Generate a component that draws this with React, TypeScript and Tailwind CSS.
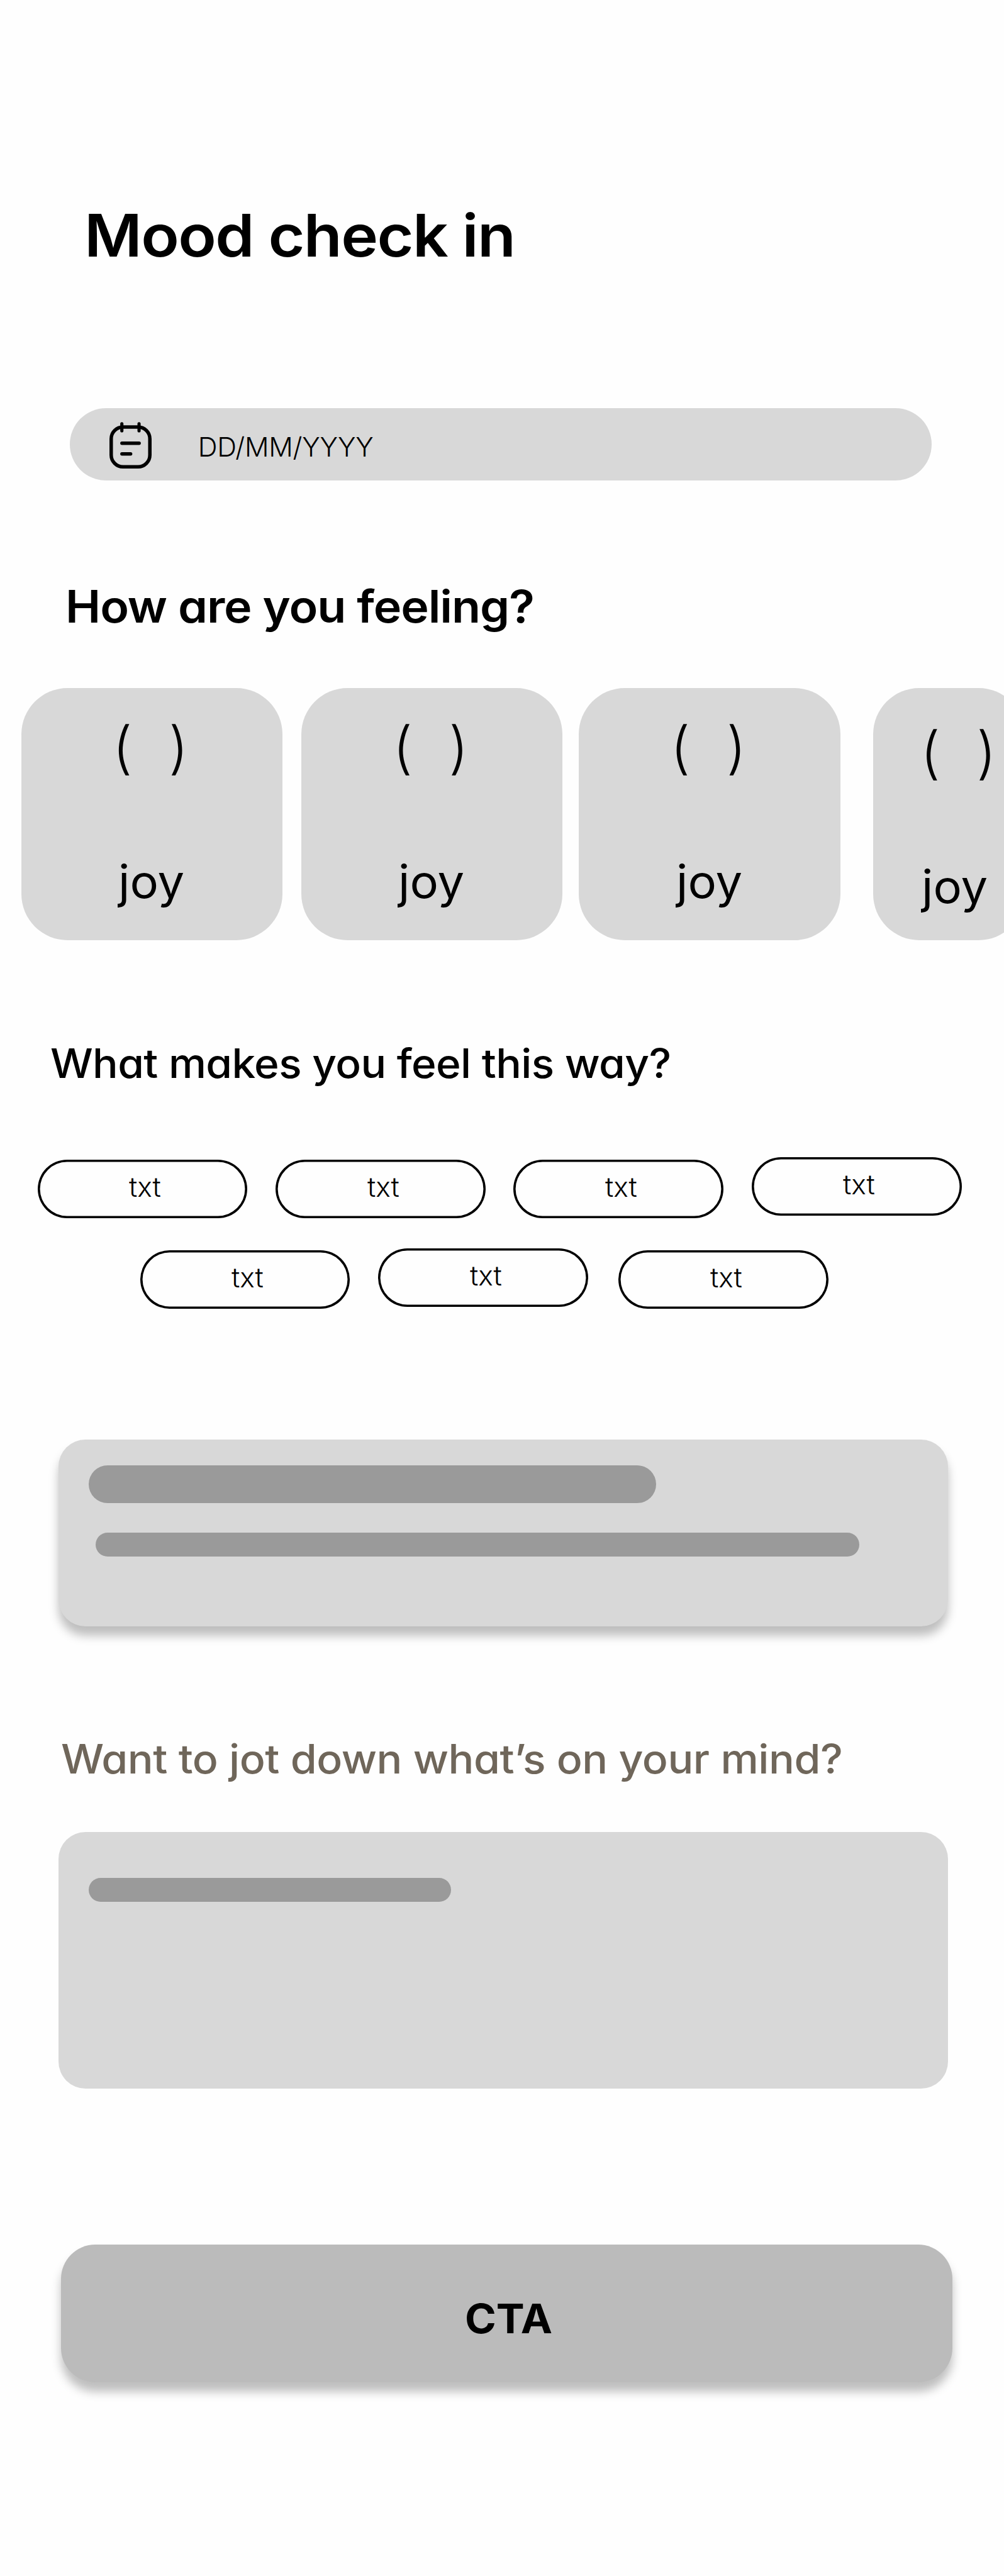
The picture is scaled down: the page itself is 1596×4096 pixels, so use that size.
function CalendarIcon() {
  return (
    <svg className="mt-[21.6px] ml-[63px] h-[75px] w-[67px] shrink-0" viewBox="0 0 75.2 84.2" fill="none" stroke="#000" strokeLinecap="round">
      <rect x="3.1" y="9" width="69" height="71" rx="21" strokeWidth="6.2" />
      <path d="M22.1 3v12.6M52.8 3v12.6" strokeWidth="5.7" />
      <path d="M22.3 37.8h30.6M22.3 57h15.4" strokeWidth="6.2" />
    </svg>
  );
}

function MoodCard({ className }: { className: string }) {
  return (
    <article className={`flex h-[400.8px] shrink-0 flex-col items-start rounded-[73.5px] bg-[#d8d8d8] ${className}`}>
      <div className="flex gap-[57.6px] text-[90px] leading-[90px] font-light">
        <span>(</span>
        <span>)</span>
      </div>
      <p className="mt-[131.2px] ml-[9px] origin-left scale-x-[1.04] text-[73px] leading-[73px]">joy</p>
    </article>
  );
}

function Chip({ className = "" }: { className?: string }) {
  return (
    <button
      className={`flex h-[92.7px] w-[333.7px] shrink-0 items-start rounded-full pt-[21.9px] pl-[145.6px] text-[43px] leading-[43px] font-light shadow-[inset_0_0_0_3.6px_#000] ${className}`}
    >
      <span className="origin-left scale-x-[1.035]">txt</span>
    </button>
  );
}

export default function App() {
  return (
    <main className="flex h-[4096px] w-[1596px] flex-col items-start overflow-hidden bg-[#fefefe] pt-[327.6px] font-['Inter',sans-serif] whitespace-nowrap text-black [font-feature-settings:'cv11']">
      <h1 className="ml-[133.6px] origin-left scale-x-[1.071] text-[93px] leading-[93px] font-semibold tracking-[-1.5px]">Mood check in</h1>

      <div className="mt-[228.6px] ml-[111.2px] flex h-[114.9px] w-[1369.6px] items-start rounded-full bg-[#d8d8d8]">
        <CalendarIcon />
        <span className="mt-[41.2px] ml-[73.6px] text-[42.8px] leading-[42.8px] font-light tracking-[-0.2px]">DD/MM/YYYY</span>
      </div>

      <h2 className="mt-[165.2px] ml-[103.8px] origin-left scale-x-[1.0614] text-[71px] leading-[71px] font-semibold tracking-[-1px]">
        How are you feeling?
      </h2>

      <section className="mt-[94.2px] flex w-full overflow-hidden pl-[33.5px]">
        <MoodCard className="w-[415.5px] pt-[49.8px] pl-[145.6px]" />
        <MoodCard className="ml-[29.8px] w-[415.5px] pt-[49.8px] pl-[145.6px]" />
        <MoodCard className="ml-[25.9px] w-[415.5px] pt-[49.8px] pl-[145.6px]" />
        <article className="ml-[52.1px] flex h-[400.8px] w-[241px] shrink-0 flex-col items-start rounded-[73.5px] bg-[#d8d8d8] pt-[57.2px] pl-[75.5px]">
          <div className="flex gap-[57.6px] text-[90px] leading-[90px] font-light">
            <span>(</span>
            <span>)</span>
          </div>
          <p className="mt-[131.2px] ml-[1.9px] origin-left scale-x-[1.04] text-[73px] leading-[73px]">joy</p>
        </article>
      </section>

      <h2 className="mt-[163.8px] ml-[80px] origin-left scale-x-[1.0556] text-[64px] leading-[64px] font-medium tracking-[-0.6px]">
        What makes you feel this way?
      </h2>

      <section className="mt-[117.1px] ml-[59.7px] flex items-start gap-[44.7px]">
        <Chip className="mt-[3.8px]" />
        <Chip className="mt-[3.8px]" />
        <Chip className="mt-[3.8px]" />
        <Chip />
      </section>
      <section className="mt-[48.3px] ml-[222.7px] flex items-start">
        <Chip className="mt-[3.5px]" />
        <Chip className="ml-[44.6px]" />
        <Chip className="mt-[3.5px] ml-[48.8px]" />
      </section>

      <section className="mt-[208.3px] ml-[92.8px] flex h-[296.4px] w-[1414.1px] flex-col items-start rounded-[43px] bg-[#d8d8d8] pt-[40.4px] shadow-[0_14.8px_14.8px_rgba(0,0,0,0.25)]">
        <div className="ml-[48.1px] h-[60px] w-[902.4px] rounded-full bg-[#9a9a9a]" />
        <div className="mt-[47.5px] ml-[59.3px] h-[37.7px] w-[1214.2px] rounded-full bg-[#9a9a9a]" />
      </section>

      <h2 className="mt-[179.2px] ml-[96.6px] origin-left scale-x-[1.0613] text-[64px] leading-[64px] font-medium tracking-[-0.4px] text-[#6f665a]">
        Want to jot down what’s on your mind?
      </h2>

      <section className="mt-[83.6px] ml-[92.8px] h-[408.2px] w-[1414.1px] rounded-[43px] bg-[#d8d8d8] pt-[73.9px] pl-[47.8px]">
        <div className="h-[37.7px] w-[576.7px] rounded-full bg-[#9a9a9a]" />
      </section>

      <button className="mt-[248.4px] ml-[96.6px] flex h-[219.1px] w-[1417.8px] items-start rounded-[54.5px] bg-[#bbbbbb] pt-[85.2px] pl-[642.6px] text-[65px] leading-[65px] font-bold shadow-[0_14.8px_14.8px_rgba(0,0,0,0.25)]">
        <span className="origin-left scale-x-[1.037]">CTA</span>
      </button>
    </main>
  );
}
